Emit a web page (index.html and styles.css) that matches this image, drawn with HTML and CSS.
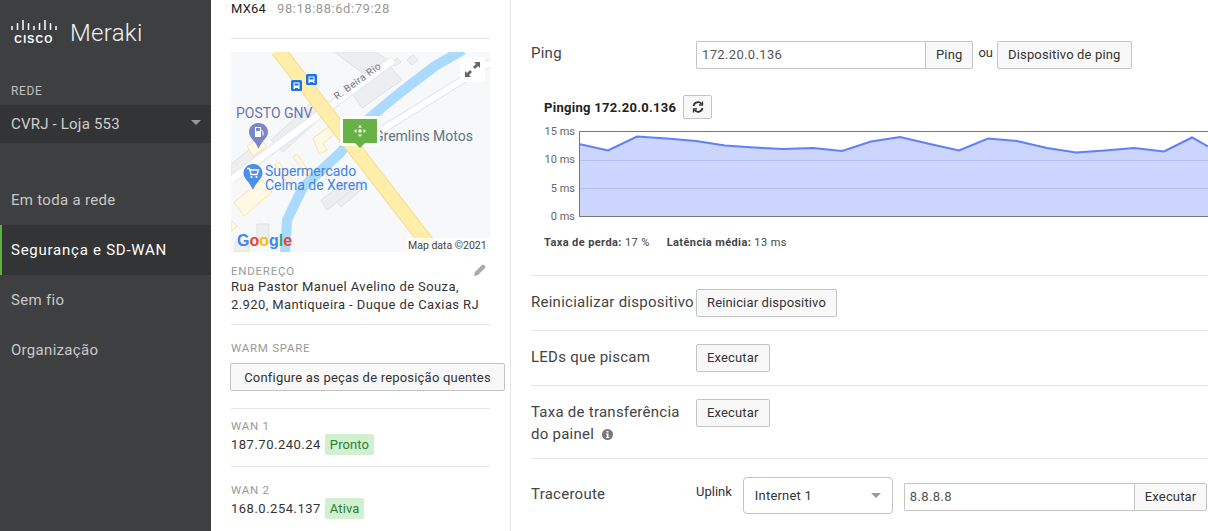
FILE: index.html
```html
<!DOCTYPE html>
<html lang="pt">
<head>
    <meta charset="UTF-8">
    <title>Meraki - Ferramentas</title>
    <link rel="stylesheet" href="styles.css">
</head>
<body>
    <div class="app">
        <nav class="sidebar">
            <div class="brand">
                <div class="cisco">
                    <svg class="cisco-bars" width="46" height="12" viewBox="0 0 46 12">
                        <path d="M1 7v4M6.500 4v7M12 1v10M17.500 4v7M23 7v4M28.500 4v7M34 1v10M39.500 4v7M45 7v4" stroke="#fff" stroke-width="1.500" fill="none"/>
                    </svg>
                    <span class="cisco-word">CISCO</span>
                </div>
                <span class="meraki">Meraki</span>
            </div>
            <div class="net-label">REDE</div>
            <div class="net-select">
                <span>CVRJ - Loja 553</span>
                <span class="net-caret"></span>
            </div>
            <ul class="menu">
                <li>Em toda a rede</li>
                <li class="active">Segurança e SD-WAN</li>
                <li>Sem fio</li>
                <li>Organização</li>
            </ul>
        </nav>

        <aside class="panel">
            <div class="model"><span class="model-name">MX64</span><span class="mac">98:18:88:6d:79:28</span></div>
            <hr class="sep sep-model">
            <svg class="map" width="259" height="200" viewBox="0 0 259 200">
                <rect width="259" height="200" fill="#f6f8f9"/>
                <g fill="#eceef0" stroke="#dfe1e4">
                    <path d="M103 0l30 22 24-14-12-8z"/>
                    <path d="M119 38l38-26 14 16-40 28z"/>
                    <path d="M40 88l48-44 12 12-48 44z"/>
                    <path d="M0 112l28-22 6 8-34 26z"/>
                    <path d="M90 148l24-18 8 8-26 20z"/>
                    <path d="M106 150l26-22 4 5-26 22z"/>
                    <path d="M4 190h14v10H4zM26 172h12v14H26z"/>
                    <path d="M160 10l6-4 4 4-6 4zM176 8l6-5 5 5-6 5z"/>
                </g>
                <g fill="#fff8e4" stroke="#fbe3ac">
                    <path d="M16 94l12-8 8 8-14 10z"/>
                    <path d="M82 86l20-14 6 6-16 14 4 6-8 4z"/>
                    <path d="M3 150l28-22 10 12-28 24z"/>
                    <path d="M0 168l6 6-6 6z"/>
                    <path d="M66 102l14 20-4 3-14-20zM48 110l14 20-4 3-14-20z"/>
                </g>
                <g fill="none">
                    <path d="M259 11L146 81" stroke="#e3e5e8" stroke-width="8"/>
                    <path d="M259 11L146 81" stroke="#fff" stroke-width="6"/>
                    <path d="M162 8L0 128" stroke="#e3e5e8" stroke-width="9"/>
                    <path d="M162 8L0 128" stroke="#fff" stroke-width="7"/>
                </g>
                <path d="M232 -2L204 14L170 40L136 68L109 101L72 135L56 168L54 202" fill="none" stroke="#aadaff" stroke-width="10"/>
                <path d="M47 -2L205 202" fill="none" stroke="#f8d98c" stroke-width="15"/>
                <path d="M47 -2L205 202" fill="none" stroke="#feeeaa" stroke-width="13"/>
                <text class="map-road" transform="translate(106 48) rotate(-36)">R. Beira Rio</text>
                <g>
                    <rect x="60" y="28" width="11" height="11" rx="1.500" fill="#1a73e8"/>
                    <path d="M62.500 30.500h6v5.500h-6z" fill="#fff"/>
                    <path d="M63.500 31.500h4v2h-4z" fill="#1a73e8"/>
                    <path d="M62.500 36h1.500v1h-1.500zM67 36h1.500v1H67z" fill="#fff"/>
                    <rect x="75" y="22" width="11" height="11" rx="1.500" fill="#1a73e8"/>
                    <path d="M77.500 24.500h6V30h-6z" fill="#fff"/>
                    <path d="M78.500 25.500h4v2h-4z" fill="#1a73e8"/>
                    <path d="M77.500 30h1.500v1h-1.500zM82 30h1.500v1H82z" fill="#fff"/>
                </g>
                <text class="map-poi map-gas" x="5" y="66">POSTO GNV</text>
                <path d="M27.500 71c5.500 0 9.500 4 9.500 9 0 6-6 8-9.500 17-3.500-9-9.500-11-9.500-17 0-5 4-9 9.500-9z" fill="#7b86c8"/>
                <path d="M24 75h6v10h-6z" fill="#fff"/>
                <path d="M25 76h4v3h-4z" fill="#7b86c8"/>
                <path d="M30 78l2 1.500v4" fill="none" stroke="#fff" stroke-width="1"/>
                <text class="map-poi map-biz" x="143" y="89">Gremlins Motos</text>
                <path d="M22 112c5.500 0 9.500 4 9.500 9 0 6-6 8-9.500 17-3.500-9-9.500-11-9.500-17 0-5 4-9 9.500-9z" fill="#4a90e8"/>
                <path d="M16 116.500h2.500l1.500 6h6l1.500-4.500h-9" fill="none" stroke="#fff" stroke-width="1.300"/>
                <circle cx="20.500" cy="125" r="1" fill="#fff"/>
                <circle cx="25.500" cy="125" r="1" fill="#fff"/>
                <text class="map-poi map-shop" x="34" y="124">Supermercado</text>
                <text class="map-poi map-shop" x="34" y="138">Celma de Xerem</text>
                <rect x="229" y="5" width="25" height="25" rx="2" fill="#fff"/>
                <path d="M243 10h6v6l-2-2-3 3-2-2 3-3zM240 25h-6v-6l2 2 3-3 2 2-3 3z" fill="#666"/>
                <rect x="109" y="64" width="40" height="30" rx="2" fill="#fff" opacity=".9"/>
                <path d="M112 67h34v24h-12l-5 5-5-5h-12z" fill="#66b245"/>
                <g fill="#fff">
                    <path d="M129 73l2 2.500h-4zM129 85l2-2.500h-4zM123 79l2.500-2v4zM135 79l-2.500-2v4z"/>
                    <rect x="127.500" y="77.500" width="3" height="3"/>
                </g>
                <text class="map-google" x="6" y="194"><tspan fill="#4285f4">G</tspan><tspan fill="#ea4335">o</tspan><tspan fill="#fbbc05">o</tspan><tspan fill="#4285f4">g</tspan><tspan fill="#34a853">l</tspan><tspan fill="#ea4335">e</tspan></text>
                <rect x="175" y="186" width="84" height="14" fill="#fff" opacity=".75"/>
                <text class="map-credit" x="177" y="197">Map data ©2021</text>
            </svg>
            <div class="address">
                <div class="address-head">
                    <span class="field-label">ENDEREÇO</span>
                    <svg width="12" height="12" viewBox="0 0 12 12"><path d="M0 12l1-4 7-7q1-1 2 0l1 1q1 1 0 2l-7 7z" fill="#aaa"/></svg>
                </div>
                <div class="address-text">Rua Pastor Manuel Avelino de Souza,<br>2.920, Mantiqueira - Duque de Caxias RJ</div>
            </div>
            <hr class="sep">
            <div class="spare">
                <div class="field-label">WARM SPARE</div>
                <button class="btn btn-spare">Configure as peças de reposição quentes</button>
            </div>
            <hr class="sep">
            <div class="wan">
                <div class="field-label">WAN 1</div>
                <div class="wan-line">187.70.240.24 <span class="tag">Pronto</span></div>
            </div>
            <hr class="sep">
            <div class="wan wan-second">
                <div class="field-label">WAN 2</div>
                <div class="wan-line">168.0.254.137 <span class="tag">Ativa</span></div>
            </div>
        </aside>

        <main class="tools">
            <div class="ping-row">
                <div class="tool-label">Ping</div>
                <div class="joined">
                    <input class="field" value="172.20.0.136">
                    <button class="btn">Ping</button>
                </div>
                <span class="or">ou</span>
                <button class="btn">Dispositivo de ping</button>
            </div>

            <section class="ping-result">
                <div class="ping-head">
                    <b>Pinging 172.20.0.136</b>
                    <button class="btn btn-icon">
                        <svg width="12" height="12" viewBox="0 0 12 12" fill="none" stroke="#333" stroke-width="1.800"><path d="M1.500 5A4.500 4.500 0 0 1 9.500 3M10.500 7A4.500 4.500 0 0 1 2.500 9"/><path d="M10.500 .5v3.500H7M1.500 11.500V8H5" stroke-width="1.300"/></svg>
                    </button>
                </div>
                <div class="chart">
                    <div class="chart-axis">
                        <span>15 ms</span><span>10 ms</span><span>5 ms</span><span>0 ms</span>
                    </div>
                    <svg class="chart-plot" width="629" height="86" viewBox="0 0 629 86">
                        <path d="M0 13L29 19.500L58 5.500L88 7.500L117 10L146 14.500L175 16.500L204 18L234 17L263 20L292 10.500L321 6L351 13L380 19.500L409 7.500L438 10L468 17L497 21.500L526 19.500L555 17L585 20.500L613 6.500L629 15.500V85H0z" fill="#ccd5fd"/>
                        <path d="M0 29.500H629M0 57.500H629" stroke="#b5bff0" stroke-width="1"/>
                        <path d="M0 13L29 19.500L58 5.500L88 7.500L117 10L146 14.500L175 16.500L204 18L234 17L263 20L292 10.500L321 6L351 13L380 19.500L409 7.500L438 10L468 17L497 21.500L526 19.500L555 17L585 20.500L613 6.500L629 15.500" fill="none" stroke="#6080fb" stroke-width="2"/>
                        <path d="M.5 85.500V.5H629M0 85.500H629" fill="none" stroke="#777" stroke-width="1"/>
                    </svg>
                </div>
                <div class="ping-stats">
                    <span><b>Taxa de perda:</b> 17 %</span>
                    <span><b>Latência média:</b> 13 ms</span>
                </div>
            </section>

            <div class="tool-row">
                <div class="tool-label">Reinicializar dispositivo</div>
                <button class="btn">Reiniciar dispositivo</button>
            </div>
            <div class="tool-row">
                <div class="tool-label">LEDs que piscam</div>
                <button class="btn">Executar</button>
            </div>
            <div class="tool-row tool-row-tall">
                <div class="tool-label">Taxa de transferência<br>do painel
                    <svg class="info" width="11" height="11" viewBox="0 0 11 11"><circle cx="5.500" cy="5.500" r="5.500" fill="#777"/><path d="M4.500 2h2v1.600h-2zM4 4.500h2.500v3.400h.7V9H4V7.900h.8V5.600H4z" fill="#fff"/></svg>
                </div>
                <button class="btn">Executar</button>
            </div>
            <div class="tool-row trace-row">
                <div class="tool-label">Traceroute</div>
                <span class="uplink">Uplink</span>
                <div class="select">
                    <span>Internet 1</span>
                    <span class="select-caret"></span>
                </div>
                <div class="joined">
                    <input class="field" value="8.8.8.8">
                    <button class="btn">Executar</button>
                </div>
            </div>
        </main>
    </div>
</body>
</html>
```
FILE: styles.css
```css
*,*::before,*::after{
    box-sizing: border-box;
}

html, body{
    margin: 0;
    height: 100%;
    overflow: hidden;
}

body{
    font-family: Roboto, "Liberation Sans", sans-serif;
    font-size: 14px;
    color: #333;
    background: #fff;
}

.app{
    display: flex;
    width: 1208px;
    height: 531px;
    overflow: hidden;
}

/* left nav */
.sidebar{
    width: 211px;
    flex: none;
    background: #3e3f40;
    color: #c8c8c8;
}

.brand{
    display: flex;
    align-items: center;
    height: 66px;
    padding-left: 11px;
    gap: 13px;
}

.cisco{
    display: flex;
    flex-direction: column;
    align-items: center;
    width: 46px;
    gap: 3px;
    margin-top: -3px;
    color: #fff;
}

.cisco-bars{
    display: block;
}

.cisco-word{
    font-family: "Liberation Sans", sans-serif;
    font-weight: 700;
    font-size: 10.500px;
    line-height: 11px;
    letter-spacing: 1.200px;
}

.meraki{
    font-size: 24px;
    font-weight: 300;
    letter-spacing: .3px;
    color: #f2f2f2;
}

.net-label{
    font-size: 12px;
    letter-spacing: .6px;
    line-height: 14px;
    height: 21px;
    margin-top: 18px;
    padding: 0 11px;
    color: #c0c0c0;
}

.net-select{
    display: flex;
    justify-content: space-between;
    align-items: center;
    height: 38px;
    padding: 0 10px 0 11px;
    background: #333435;
    font-size: 15px;
    letter-spacing: .2px;
    color: #cfcfcf;
}

.net-caret{
    border-left: 5px solid transparent;
    border-right: 5px solid transparent;
    border-top: 5px solid #999;
    margin-top: -3px;
}

.menu{
    list-style: none;
    margin: 32px 0 0;
    padding: 0;
}

.menu li{
    height: 50px;
    line-height: 50px;
    padding-left: 11px;
    font-size: 15px;
    letter-spacing: .3px;
}

.menu .active{
    background: #333435;
    border-left: 2px solid #5cb33c;
    padding-left: 9px;
    color: #fff;
    letter-spacing: .75px;
}

/* device panel */
.panel{
    width: 300px;
    flex: none;
    padding: 0 20px;
    border-right: 1px solid #e4e4e4;
    white-space: nowrap;
}

.model{
    padding-top: 1px;
    line-height: 16px;
    font-size: 13px;
    letter-spacing: .2px;
}

.model-name{
    color: #222;
    margin-right: 11px;
}

.mac{
    color: #999;
    letter-spacing: .55px;
}

.sep{
    border: 0;
    border-top: 1px solid #e4e4e4;
    margin: 0;
    width: 259px;
}

.sep-model{
    margin-top: 21px;
    margin-bottom: 13px;
}

.map{
    display: block;
}

.field-label{
    font-size: 11.500px;
    line-height: 14px;
    letter-spacing: .75px;
    color: #999;
}

.address{
    padding: 12px 0 0;
    height: 72px;
    width: 259px;
}

.address-head{
    display: flex;
    justify-content: space-between;
    align-items: flex-start;
    padding-right: 4px;
}

.address-text{
    font-size: 13px;
    line-height: 18px;
    letter-spacing: .4px;
    color: #333;
}

.spare{
    height: 83px;
    padding-top: 16px;
}

.btn{
    font-family: inherit;
    font-size: 13px;
    letter-spacing: .15px;
    color: #333;
    height: 28px;
    padding: 0 10px 1px;
    background: #f8f8f8;
    border: 1px solid #c4c4c4;
    border-radius: 2px;
    white-space: nowrap;
}

.btn-spare{
    display: block;
    margin: 8px 0 0 -1px;
    width: 275px;
    padding: 0;
    letter-spacing: .2px;
}

.wan{
    height: 57px;
    padding-top: 10px;
}

.wan-second{
    padding-top: 16px;
}

.wan-line{
    display: flex;
    align-items: center;
    gap: 4px;
    height: 22px;
    font-size: 13px;
    letter-spacing: .5px;
}

.tag{
    display: inline-block;
    padding: 0 5px;
    line-height: 21px;
    background: #d0f0d0;
    border-radius: 2px;
    color: #2e7d32;
    letter-spacing: .1px;
}

/* map labels */
.map-road{
    font-size: 10px;
    fill: #777;
    letter-spacing: .4px;
}

.map-poi{
    font-size: 14px;
}

.map-gas{
    fill: #6a72b8;
}

.map-biz{
    fill: #5f7380;
}

.map-shop{
    fill: #3f84e8;
}

.map-google{
    font-family: "Liberation Sans", sans-serif;
    font-size: 16px;
    font-weight: 700;
}

.map-credit{
    font-size: 10.500px;
    fill: #444;
}

/* tools */
.tools{
    flex: 1;
    min-width: 0;
    padding: 41px 0 0 20px;
}

.tool-label{
    width: 165px;
    flex: none;
    font-size: 15px;
    letter-spacing: .25px;
    line-height: 22px;
    color: #444;
}

.ping-row{
    display: flex;
    align-items: flex-start;
    height: 54px;
}

.ping-row .tool-label{
    margin-top: 1px;
}

.ping-row .field{
    width: 229px;
}

.joined{
    display: flex;
}

.field{
    width: 230px;
    height: 28px;
    padding: 0 5px 1px;
    font-family: inherit;
    font-size: 13px;
    letter-spacing: .35px;
    color: #555;
    border: 1px solid #c4c4c4;
    border-right: 0;
    border-radius: 2px 0 0 2px;
    outline: 0;
}

.joined .btn{
    border-radius: 0 2px 2px 0;
}

.or{
    margin: 0 4px 0 5px;
    font-size: 13px;
    line-height: 24px;
}

.ping-result{
    padding-left: 13px;
    height: 180px;
}

.ping-head{
    display: flex;
    align-items: center;
    gap: 7px;
    font-size: 13px;
    letter-spacing: .3px;
    color: #222;
    height: 24px;
}

.btn-icon{
    width: 29px;
    height: 24px;
    padding: 0;
    display: flex;
    align-items: center;
    justify-content: center;
}

.chart{
    display: flex;
    margin-top: 12px;
}

.chart-axis{
    width: 35px;
    flex: none;
    height: 97px;
    margin: -5px 0 0;
    padding-right: 4px;
    display: flex;
    flex-direction: column;
    justify-content: space-between;
    align-items: flex-end;
    font-size: 11px;
    line-height: 12px;
    color: #666;
    white-space: nowrap;
}

.chart-plot{
    flex: none;
    display: block;
}

.ping-stats{
    display: flex;
    gap: 17px;
    margin-top: 13px;
    font-size: 11px;
    letter-spacing: .4px;
    line-height: 14px;
    color: #444;
}

.tool-row{
    display: flex;
    align-items: flex-start;
    height: 55px;
    padding-top: 13px;
    border-top: 1px solid #e4e4e4;
}

.tool-row .tool-label{
    margin-top: 2px;
}

.tool-row-tall{
    height: 73px;
}

.info{
    margin-left: 4px;
    vertical-align: -1px;
}

.trace-row{
    padding-top: 18px;
    height: 73px;
}

.trace-row .tool-label{
    margin-top: 6px;
}

.uplink{
    font-size: 13px;
    line-height: 30px;
    margin-right: 11px;
}

.select{
    display: flex;
    justify-content: space-between;
    align-items: center;
    width: 150px;
    height: 37px;
    padding: 0 11px;
    font-size: 13px;
    letter-spacing: .2px;
    border: 1px solid #c4c4c4;
    border-radius: 4px;
    margin-right: 11px;
}

.select-caret{
    border-left: 5px solid transparent;
    border-right: 5px solid transparent;
    border-top: 5px solid #999;
}

.trace-row .joined{
    margin-top: 6px;
}
```
